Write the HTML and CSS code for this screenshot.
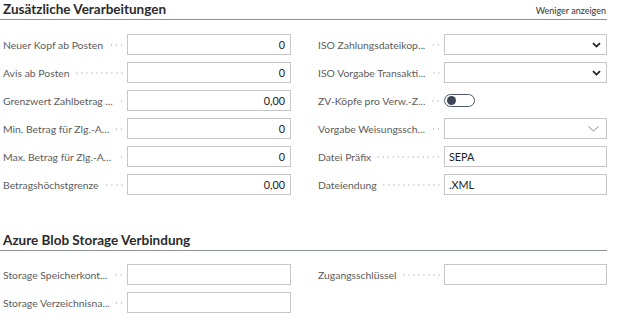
FILE: index.html
```html
<!DOCTYPE html>
<html lang="de">
<head>
  <meta charset="UTF-8">
  <meta name="viewport" content="width=device-width, initial-scale=1.0">
  <title>Zusätzliche Verarbeitungen</title>
  <link rel="stylesheet" href="styles.css">
</head>
<body>
  <div class="page">
    <section class="group">
      <div class="group-header">
        <h2>Zusätzliche Verarbeitungen</h2>
        <a class="show-less" href="#">Weniger anzeigen</a>
      </div>
      <div class="fields">
        <div class="column column-left">
          <div class="field">
            <label><span class="caption">Neuer Kopf ab Posten</span><span class="leader"></span></label>
            <input type="text" class="num" value="0">
          </div>
          <div class="field">
            <label><span class="caption">Avis ab Posten</span><span class="leader"></span></label>
            <input type="text" class="num" value="0">
          </div>
          <div class="field">
            <label><span class="caption">Grenzwert Zahlbetrag ...</span><span class="leader"></span></label>
            <input type="text" class="num" value="0,00">
          </div>
          <div class="field">
            <label><span class="caption">Min. Betrag für Zlg.-A...</span><span class="leader"></span></label>
            <input type="text" class="num" value="0">
          </div>
          <div class="field">
            <label><span class="caption">Max. Betrag für Zlg.-A...</span><span class="leader"></span></label>
            <input type="text" class="num" value="0">
          </div>
          <div class="field">
            <label><span class="caption">Betragshöchstgrenze</span><span class="leader"></span></label>
            <input type="text" class="num" value="0,00">
          </div>
        </div>
        <div class="column column-right">
          <div class="field">
            <label><span class="caption">ISO Zahlungsdateikop...</span><span class="leader"></span></label>
            <div class="select">
              <svg class="chevron" width="9" height="6" viewBox="0 0 9 6"><path d="M1 1.2 L4.5 4.6 L8 1.2" fill="none" stroke="#222" stroke-width="1.8"/></svg>
            </div>
          </div>
          <div class="field">
            <label><span class="caption">ISO Vorgabe Transakti...</span><span class="leader"></span></label>
            <div class="select">
              <svg class="chevron" width="9" height="6" viewBox="0 0 9 6"><path d="M1 1.2 L4.5 4.6 L8 1.2" fill="none" stroke="#222" stroke-width="1.8"/></svg>
            </div>
          </div>
          <div class="field">
            <label><span class="caption">ZV-Köpfe pro Verw.-Z...</span><span class="leader"></span></label>
            <div class="toggle"><span class="knob"></span></div>
          </div>
          <div class="field">
            <label><span class="caption">Vorgabe Weisungssch...</span><span class="leader"></span></label>
            <div class="select">
              <svg class="chevron thin" width="11" height="6" viewBox="0 0 11 6"><path d="M0.5 0.5 L5.5 5 L10.5 0.5" fill="none" stroke="#8a8a8a" stroke-width="1"/></svg>
            </div>
          </div>
          <div class="field">
            <label><span class="caption">Datei Präfix</span><span class="leader"></span></label>
            <input type="text" value="SEPA">
          </div>
          <div class="field">
            <label><span class="caption">Dateiendung</span><span class="leader"></span></label>
            <input type="text" value=".XML">
          </div>
        </div>
      </div>
    </section>

    <section class="group group-second">
      <div class="group-header">
        <h2>Azure Blob Storage Verbindung</h2>
      </div>
      <div class="fields">
        <div class="column column-left">
          <div class="field">
            <label><span class="caption">Storage Speicherkont...</span><span class="leader"></span></label>
            <input type="text" value="">
          </div>
          <div class="field">
            <label><span class="caption">Storage Verzeichnisna...</span><span class="leader"></span></label>
            <input type="text" value="">
          </div>
        </div>
        <div class="column column-right">
          <div class="field">
            <label><span class="caption">Zugangsschlüssel</span><span class="leader"></span></label>
            <input type="text" value="">
          </div>
        </div>
      </div>
    </section>
  </div>
</body>
</html>
```

FILE: styles.css
```css
body {
  margin: 0;
  background: #fff;
  font-family: Lato, "Open Sans", sans-serif;
  color: #212121;
}
.page {
  width: 607px;
}
.group-header {
  display: flex;
  justify-content: space-between;
  align-items: flex-end;
  height: 19px;
  border-bottom: 1px solid #8d9199;
}
.group-header h2 {
  margin: 0 0 0 3px;
  font-size: 13.5px;
  font-weight: 700;
  line-height: 20px;
  color: #2a2a2a;
}
.show-less {
  font-size: 9px;
  line-height: 14px;
  margin-bottom: 1px;
  color: #333;
  text-decoration: none;
  margin-right: 1px;
}
.fields {
  display: flex;
  gap: 27px;
  margin-top: 14px;
}
.group-second {
  margin-top: 36px;
}
.group-second .fields {
  margin-top: 13px;
}
.column {
  display: flex;
  flex-direction: column;
  gap: 7px;
}
.column-left {
  width: 291px;
}
.column-right {
  width: 289px;
}
.field {
  display: flex;
  align-items: center;
  height: 21px;
}
.field label {
  display: flex;
  align-items: center;
  flex: 0 0 auto;
  width: 127px;
  box-sizing: border-box;
  padding: 0 3px;
  font-size: 10.4px;
  color: #5c5c5c;
  white-space: nowrap;
}
.column-right .field label {
  width: 126px;
  padding-left: 0;
}
.leader {
  flex: 1 1 auto;
  min-width: 3px;
  height: 2px;
  margin-left: 6px;
  background-image: radial-gradient(circle, #c8c8c8 0.6px, transparent 0.9px);
  background-size: 5px 2px;
  background-position: right center;
}
.field input,
.select {
  flex: 1 1 auto;
  height: 21px;
  box-sizing: border-box;
  border: 1px solid #c6c6c6;
  border-radius: 0;
  padding: 0 4px;
  font-family: inherit;
  font-size: 10.8px;
  color: #212121;
  outline: none;
  min-width: 0;
}
.field input.num {
  text-align: right;
  padding-right: 5px;
}
.select {
  display: flex;
  align-items: center;
  justify-content: flex-end;
  padding-right: 5px;
}
.chevron.thin {
  margin-right: 2px;
}
.toggle {
  width: 31px;
  height: 13px;
  box-sizing: border-box;
  border: 1px solid #505a68;
  border-radius: 7px;
  display: flex;
  align-items: center;
  padding-left: 2px;
}
.knob {
  width: 9px;
  height: 9px;
  border-radius: 50%;
  background: #3e4756;
}
```
